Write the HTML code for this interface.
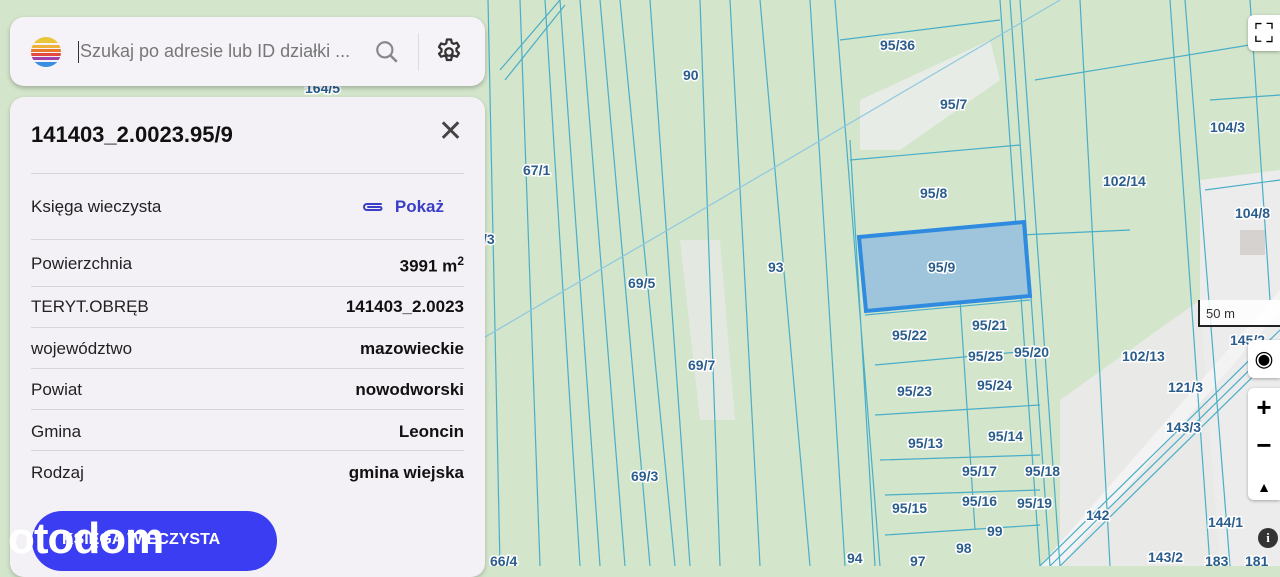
<!DOCTYPE html>
<html><head><meta charset="utf-8"><style>
body{margin:0;width:1280px;height:566px;overflow:hidden;position:relative;font-family:"Liberation Sans",sans-serif;background:#d3e5cb}
svg.map{position:absolute;left:0;top:0}
.search{position:absolute;left:10px;top:17px;width:475px;height:69px;background:#f6f3f8;border-radius:14px;box-shadow:0 2px 5px rgba(0,0,0,.25)}
.panel{position:absolute;left:10px;top:97px;width:475px;height:480px;background:#f4f1f6;border-radius:14px;box-shadow:0 2px 5px rgba(0,0,0,.2)}
.row{position:absolute;left:21px;width:433px;font-size:17px;color:#222;display:flex;justify-content:space-between}
.row b{color:#111}
.sep{position:absolute;left:21px;width:433px;height:1px;background:#d8d5da}
.btn{position:absolute;left:22px;top:414px;width:245px;height:60px;border-radius:30px;background:#3b3df2;color:#fff;font-weight:bold;font-size:16px}
.lbl{font:bold 14px "Liberation Sans",sans-serif;fill:#2a5d8c;stroke:#fff;stroke-width:3;paint-order:stroke}
.ctl{position:absolute;right:0;width:32px;background:#fff;border-radius:6px 0 0 6px;box-shadow:0 1px 3px rgba(0,0,0,.3)}
</style></head><body>
<svg class="map" width="1280" height="566" viewBox="0 0 1280 566">
<rect width="1280" height="566" fill="#d3e5cb"/>
<path d="M860 100 L990 40 L1000 80 L900 150 L860 150Z" fill="#e8ece6"/>
<path d="M680 240 L720 240 L735 420 L700 420Z" fill="#e3e9e0"/>
<path d="M1200 180 L1280 170 L1280 566 L1200 566Z" fill="#ececec"/>
<path d="M1060 400 L1200 300 L1220 566 L1060 566Z" fill="#e9eae8"/>
<rect x="1240" y="230" width="25" height="25" fill="#d6d2d0"/>
<path d="M1280 290 L1040 566 L1060 566 L1280 310Z" fill="#f3f3f3"/>
<g stroke="#4aaec8" stroke-width="1.2" fill="none">
<path d="M488 0 L500 566 M520 0 L540 566 M545 0 L580 566 M560 0 L600 566 M580 0 L625 566 M600 0 L650 566 M620 0 L675 566 M650 0 L690 566 M700 0 L720 566 M730 0 L760 566 M760 0 L810 566 M810 0 L845 566 M835 0 L880 566 M850 140 L875 566 M1000 0 L1040 566 M1010 0 L1050 566 M1020 0 L1060 566 M1080 0 L1110 566 M1170 0 L1210 566 M1185 0 L1230 566 M1250 0 L1270 300"/>
<path d="M840 40 L1000 20 M850 160 L1020 145 M1020 235 L1130 230 M1210 100 L1280 95 M1205 190 L1280 180 M865 315 L1030 300 M875 365 L1040 350 M875 415 L1040 405 M880 460 L1040 455 M885 495 L1040 490 M885 535 L1040 525 M960 300 L975 530 M1035 80 L1280 40"/>
<path d="M480 340 L1060 0" stroke="#8ec8e0"/>
<path d="M1040 566 L1280 330 M1050 566 L1280 340 M1060 566 L1280 350"/>
<path d="M500 70 L560 0 M505 80 L565 5"/>
</g>
<path d="M859 237 L1024 222 L1030 296 L866 311Z" fill="#9fc5dc" stroke="#2f8be0" stroke-width="4"/>
<g class="lbl">
<text x="683" y="80">90</text><text x="880" y="50">95/36</text><text x="940" y="109">95/7</text><text x="1210" y="132">104/3</text>
<text x="523" y="175">67/1</text><text x="920" y="198">95/8</text><text x="1103" y="186">102/14</text><text x="1235" y="218">104/8</text>
<text x="483" y="244">/3</text><text x="768" y="272">93</text><text x="928" y="272">95/9</text><text x="628" y="288">69/5</text>
<text x="972" y="330">95/21</text><text x="892" y="340">95/22</text><text x="968" y="361">95/25</text><text x="1014" y="357">95/20</text>
<text x="1122" y="361">102/13</text><text x="688" y="370">69/7</text><text x="1168" y="392">121/3</text><text x="897" y="396">95/23</text>
<text x="977" y="390">95/24</text><text x="1166" y="432">143/3</text><text x="908" y="448">95/13</text><text x="988" y="441">95/14</text>
<text x="631" y="481">69/3</text><text x="962" y="476">95/17</text><text x="1025" y="476">95/18</text><text x="962" y="506">95/16</text>
<text x="1017" y="508">95/19</text><text x="892" y="513">95/15</text><text x="1086" y="520">142</text><text x="1208" y="527">144/1</text>
<text x="987" y="536">99</text><text x="490" y="566">66/4</text><text x="847" y="563">94</text><text x="910" y="566">97</text>
<text x="956" y="553">98</text><text x="1148" y="562">143/2</text><text x="1205" y="566">183</text><text x="1245" y="566">181</text>
<text x="1230" y="345">145/2</text><text x="305" y="93">164/5</text>
</g>
<rect x="1198" y="300" width="82" height="26" fill="#fff" opacity=".85"/>
<path d="M1199 300 V326 H1280" stroke="#222" stroke-width="2" fill="none"/>
<text x="1206" y="318" font-size="13" fill="#333" font-family="Liberation Sans">50 m</text>
</svg>
<div class="search">
<svg style="position:absolute;left:20px;top:19px" width="32" height="32" viewBox="0 0 32 32">
<clipPath id="c"><circle cx="16" cy="16" r="15"/></clipPath>
<g clip-path="url(#c)"><rect y="0" width="32" height="7" fill="#e9c53a"/><rect y="9" width="32" height="3" fill="#f0b13a"/><rect y="13" width="32" height="3" fill="#e8792d"/><rect y="17" width="32" height="3" fill="#e24a3f"/><rect y="21" width="32" height="3" fill="#a23fa8"/><rect y="26" width="32" height="6" fill="#3a8ee0"/></g></svg>
<div style="position:absolute;left:68px;top:24px;width:1px;height:22px;background:#333"></div>
<div style="position:absolute;left:70px;top:24px;font-size:18px;color:#777">Szukaj po adresie lub ID działki ...</div>
<svg style="position:absolute;left:364px;top:22px" width="26" height="26" viewBox="0 0 24 24"><circle cx="10" cy="10" r="7" stroke="#888" stroke-width="2" fill="none"/><path d="M15 15 L21 21" stroke="#888" stroke-width="2.4"/></svg>
<div style="position:absolute;left:408px;top:16px;width:1px;height:38px;background:#ddd"></div>
<svg style="position:absolute;left:424px;top:20px" width="30" height="30" viewBox="0 0 24 24"><path d="M12 9a3 3 0 1 0 0 6a3 3 0 1 0 0-6z M10.3 2h3.4l.5 2.6 1.6.9 2.5-.9 1.7 2.9-2 1.8v1.9l2 1.7-1.7 2.9-2.5-.9-1.6.9-.5 2.6h-3.4l-.5-2.6-1.6-.9-2.5.9L4 13.4l2-1.7V9.8L4 8l1.7-2.9 2.5.9 1.6-.9z" fill="none" stroke="#333" stroke-width="1.8" stroke-linejoin="round"/></svg>
</div>
<div class="panel">
<div style="position:absolute;left:21px;top:25px;font-size:22px;font-weight:bold;color:#111">141403_2.0023.95/9</div>
<div style="position:absolute;left:428px;top:20px;font-size:30px;color:#444;line-height:1">✕</div>
<div class="sep" style="top:76px"></div>
<div class="row" style="top:100px"><span>Księga wieczysta</span><span style="color:#3b3fc8;font-weight:bold;margin-right:20px;display:flex;align-items:center"><svg width="24" height="14" viewBox="0 0 24 14" style="margin-right:10px"><path d="M20 4H6a3 3 0 0 0 0 6h13a1.5 1.5 0 0 0 0-3H7" fill="none" stroke="#3b3fc8" stroke-width="2" stroke-linecap="round"/></svg>Pokaż</span></div>
<div class="sep" style="top:142px"></div>
<div class="row" style="top:157px"><span>Powierzchnia</span><b>3991 m<sup style="font-size:12px">2</sup></b></div>
<div class="sep" style="top:189px"></div>
<div class="row" style="top:200px"><span>TERYT.OBRĘB</span><b>141403_2.0023</b></div>
<div class="sep" style="top:230px"></div>
<div class="row" style="top:242px"><span>województwo</span><b>mazowieckie</b></div>
<div class="sep" style="top:271px"></div>
<div class="row" style="top:283px"><span>Powiat</span><b>nowodworski</b></div>
<div class="sep" style="top:312px"></div>
<div class="row" style="top:325px"><span>Gmina</span><b>Leoncin</b></div>
<div class="sep" style="top:353px"></div>
<div class="row" style="top:366px"><span>Rodzaj</span><b>gmina wiejska</b></div>
<div class="btn"><span style="position:absolute;left:30px;top:20px">KSIĘGA WIECZYSTA</span></div>
</div>
<div style="position:absolute;left:8px;top:514px;font-size:44px;font-weight:bold;color:#fff;letter-spacing:-1px">otodom</div>
<div class="ctl" style="top:15px;height:36px;font-size:26px;text-align:center;line-height:36px">⛶</div>
<div class="ctl" style="top:340px;height:38px;text-align:center;line-height:38px;font-size:22px">◉</div>
<div class="ctl" style="top:388px;height:112px;text-align:center;font-size:26px;font-weight:bold;line-height:38px">+<br>−<br><span style="font-size:14px">▲</span></div>
<div style="position:absolute;left:1258px;top:528px;width:20px;height:20px;border-radius:50%;background:#333;color:#fff;font:bold 13px 'Liberation Serif';text-align:center;line-height:20px">i</div>
</body></html>
